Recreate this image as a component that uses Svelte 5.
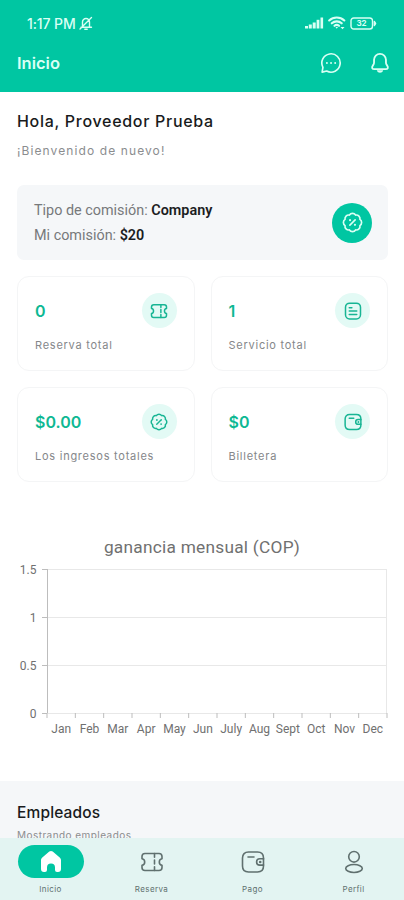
<script>
  let active = $state('home');

  const stats = [
    { value: '0',     label: 'Reserva total',        icon: 'ticket' },
    { value: '1',     label: 'Servicio total',       icon: 'doc'    },
    { value: '$0.00', label: 'Los ingresos totales', icon: 'seal'   },
    { value: '$0',    label: 'Billetera',            icon: 'wallet' },
  ];

  const tabs = [
    { id: 'home',    label: 'Inicio',  icon: 'home'   },
    { id: 'booking', label: 'Reserva', icon: 'ticket' },
    { id: 'payment', label: 'Pago',    icon: 'wallet' },
    { id: 'profile', label: 'Perfil',  icon: 'user'   },
  ];

  const months = ['Jan', 'Feb', 'Mar', 'Apr', 'May', 'Jun', 'July', 'Aug', 'Sept', 'Oct', 'Nov', 'Dec'];
  const levels = ['1.5', '1', '0.5', '0'];

  // plot area of the chart, in svg units
  const plot = { x: 47, y: 10, w: 340, h: 144 };
  const step = plot.w / months.length;

  // scalloped outline of the discount badge
  function scallop(bumps, r) {
    let d = '';
    for (let i = 0; i <= bumps; i++) {
      const a = (i / bumps) * Math.PI * 2 - Math.PI / 2 + Math.PI / bumps;
      const x = (12 + r * Math.cos(a)).toFixed(2);
      const y = (12 + r * Math.sin(a)).toFixed(2);
      d += i === 0 ? `M${x} ${y}` : `A4.2 4.2 0 0 1 ${x} ${y}`;
    }
    return d + 'Z';
  }
  const seal = scallop(8, 9.2);
</script>

{#snippet icon(name, size, width = 1.6)}
  <svg class="icon" width={size} height={size} viewBox="0 0 24 24" stroke-width={width}>
    {#if name === 'ticket'}
      <path d="M5 3.500h14a3 3 0 0 1 3 3v2.200c-1.700.2-2.700 1.600-2.700 3.300s1 3.100 2.700 3.300v2.200a3 3 0 0 1-3 3H5a3 3 0 0 1-3-3v-2.200c1.700-.2 2.700-1.600 2.700-3.300S3.700 8.900 2 8.700V6.500a3 3 0 0 1 3-3z" />
      <path d="M14.5 3.500v3.800M14.500 10v4M14.500 16.700v3.800" />
    {:else if name === 'doc'}
      <rect x="2" y="1.500" width="20" height="21" rx="5.500" />
      <path d="M7 7.500h3.500M7 12h10M7 16.500h10" />
    {:else if name === 'seal'}
      <path d={seal} />
      <path d="M9 15l6-6" />
      <circle class="dot" cx="9.200" cy="9.300" r="1.200" />
      <circle class="dot" cx="14.800" cy="14.700" r="1.200" />
    {:else if name === 'wallet'}
      <path d="M22.500 9V8c0-3.800-2.200-6-6-6h-9c-3.800 0-6 2.200-6 6v8c0 3.800 2.200 6 6 6h9c3.800 0 6-2.200 6-6v-1" />
      <path d="M22.500 8.700h-3.700a3.200 3.200 0 0 0 0 6.400h3.700zM7 7h6" />
      <circle class="dot" cx="19.200" cy="12" r="1.300" />
    {:else if name === 'user'}
      <circle cx="12" cy="6.800" r="5.300" />
      <ellipse cx="12" cy="18.500" rx="8.300" ry="4" />
    {:else if name === 'home'}
      <path class="solid" d="M10.300 1.600a2.800 2.800 0 0 1 3.400 0l7 5.800A3.400 3.400 0 0 1 22 10.100V19a3 3 0 0 1-3 3h-1a2 2 0 0 1-2-2v-2.500a4 4 0 0 0-8 0V20a2 2 0 0 1-2 2H5a3 3 0 0 1-3-3v-8.900a3.400 3.400 0 0 1 1.300-2.700z" />
    {:else if name === 'chat'}
      <path d="M2.300 22l.9-5.300a10 10 0 1 1 4.100 4.100z" />
      <path class="dots" d="M7.500 12h.1M12 12h.1M16.500 12h.1" />
    {:else if name === 'bell'}
      <path d="M12 2a6.500 6.500 0 0 0-6.500 6.500v3.200c0 1-.4 1.800-1.200 2.900-1.700 2.300-1 4.100 1.700 4.100h12c2.700 0 3.400-1.800 1.700-4.100-.8-1.100-1.200-1.900-1.200-2.900V8.500A6.500 6.500 0 0 0 12 2z" />
      <path class="solid" d="M8.500 20h7c-.7 2-2 2.600-3.500 2.600S9.200 22 8.500 20z" />
    {/if}
  </svg>
{/snippet}

<div class="screen">
  <header>
    <div class="status">
      <span class="time">1:17 PM</span>
      <svg class="icon" width="14" height="15" viewBox="0 0 14 15" stroke-width="1.4">
        <path d="M3.500 10.500V6A3.500 3.500 0 0 1 10.500 6v4.500M2 11.300h10.500M5.800 13.300h2.400M1 13L12.500 1.500" />
      </svg>
      <div class="signals">
        <svg width="19" height="12" viewBox="0 0 19 12" fill="currentColor">
          <rect x="0" y="9" width="3" height="2.500" />
          <rect x="3.800" y="7.500" width="3" height="4" />
          <rect x="7.700" y="5.500" width="3" height="6" />
          <rect x="11.600" y="2.800" width="2.800" height="8.700" />
          <rect x="15.500" y="0.500" width="2.600" height="11" />
        </svg>
        <svg class="icon" width="18" height="14" viewBox="0 0 18 14" stroke-width="2.1">
          <path d="M1.200 4.500a11 11 0 0 1 15.100 0M3.800 7.300a7.200 7.200 0 0 1 9.900 0M6.500 9.800a3.500 3.500 0 0 1 4.500 0" />
          <path class="solid" d="M7.500 11h2.500l-1.250 1.700zM12.500 11h4l-2 2.300z" />
        </svg>
        <span class="battery">
          <svg class="icon" width="27" height="13" viewBox="0 0 27 13" stroke-width="1.4">
            <rect x="1" y="1" width="21.500" height="11" rx="2.800" />
            <path d="M24.300 4.500l1.300 2-1.300 2z" />
          </svg>
          <b>32</b>
        </span>
      </div>
    </div>
    <div class="appbar">
      <h1>Inicio</h1>
      <button aria-label="Mensajes">{@render icon('chat', 22, 1.8)}</button>
      <button aria-label="Notificaciones">{@render icon('bell', 22, 2)}</button>
    </div>
  </header>

  <main>
    <h2 class="hello">Hola, Proveedor Prueba</h2>
    <p class="welcome">¡Bienvenido de nuevo!</p>

    <section class="commission">
      <div>
        <p>Tipo de comisión: <b>Company</b></p>
        <p>Mi comisión: <b>$20</b></p>
      </div>
      <span class="badge">{@render icon('seal', 21, 1.9)}</span>
    </section>

    <section class="stats">
      {#each stats as { value, label, icon: name }}
        <article>
          <div class="row">
            <strong>{value}</strong>
            <span class="bubble">{@render icon(name, 18, 2)}</span>
          </div>
          <p>{label}</p>
        </article>
      {/each}
    </section>
  </main>

  <section class="chart">
    <h3>ganancia mensual (COP)</h3>
    <svg width="404" height="190" viewBox="0 0 404 190">
      {#each levels as level, i}
        {@const y = plot.y + (i * plot.h) / 3 + 0.5}
        <line class="grid" x1={plot.x} x2={plot.x + plot.w} y1={y} y2={y} />
        <line class="axis" x1={plot.x - 5} x2={plot.x} y1={y} y2={y} />
        <text x="36.5" y={y + 4} text-anchor="end">{level}</text>
      {/each}
      <line class="grid" x1={plot.x + plot.w - 0.5} x2={plot.x + plot.w - 0.5} y1={plot.y} y2={plot.y + plot.h} />
      <line class="axis" x1={plot.x + 0.5} x2={plot.x + 0.5} y1={plot.y} y2={plot.y + plot.h} />
      {#each months as month, i}
        <text x={plot.x + step * (i + 0.5)} y="174" text-anchor="middle">{month}</text>
      {/each}
      {#each { length: 13 } as _, i}
        <line class="axis" x1={plot.x + step * i} x2={plot.x + step * i} y1={plot.y + plot.h} y2={plot.y + plot.h + 5} />
      {/each}
    </svg>
  </section>

  <section class="staff">
    <h2>Empleados</h2>
    <p>Mostrando empleados</p>
  </section>

  <nav>
    {#each tabs as { id, label, icon: name }}
      <button class:active={active === id} onclick={() => active = id}>
        <span class="pill">{@render icon(name, 24, 1.6)}</span>
        <span class="label">{label}</span>
      </button>
    {/each}
  </nav>
</div>

<style>
  :global(body) { background: #fff; }
  .screen {
    --green: #00c6a2;
    --sans: Inter, "Open Sans", sans-serif;
    width: 404px; height: 900px; overflow: hidden;
    display: flex; flex-direction: column;
    font-family: var(--sans); color: #191b1c; background: #fff;
  }
  h1, h2, h3, p { margin: 0; }
  button {
    padding: 0; border: none; background: none;
    color: inherit; font: inherit; cursor: pointer;
  }
  svg { display: block; flex-shrink: 0; }
  .icon { fill: none; stroke: currentColor; stroke-linecap: round; stroke-linejoin: round; }
  .icon .solid, .icon .dot { fill: currentColor; stroke: none; }
  .icon .dots { stroke-width: 2; }

  header {
    height: 92px; flex-shrink: 0; box-sizing: border-box;
    background: var(--green); color: #d9fff4;
  }
  .status {
    display: flex; align-items: center; height: 46px;
    padding: 0 27px;
  }
  .time { font-size: 14px; font-weight: 500; letter-spacing: -0.1px; margin-right: 3px; }
  .signals { display: flex; align-items: center; gap: 4px; margin-left: auto; }
  .battery { position: relative; }
  .battery b {
    position: absolute; left: 0; top: 0; width: 23px;
    font-size: 8px; line-height: 13px; text-align: center;
  }
  .appbar {
    display: flex; align-items: center; height: 34px;
    padding: 0 13px 0 17px; gap: 27px;
  }
  h1 { margin-right: auto; font-size: 16.5px; font-weight: 600; letter-spacing: 0; }

  main { padding: 18px 16px 0 17px; }
  .hello { font-size: 16px; line-height: 22px; font-weight: 500; letter-spacing: 0.7px; white-space: nowrap; }
  .welcome { margin-top: 8px; font-size: 12px; line-height: 22px; letter-spacing: 1.1px; color: #8b8d8f; }

  .commission {
    display: flex; align-items: center; justify-content: space-between;
    height: 75px; margin-top: 23px; padding: 0 16px 0 17px; box-sizing: border-box;
    border-radius: 7px; background: #f5f7f9;
    font-family: Roboto, sans-serif; font-size: 14.4px; line-height: 25px; color: #77797b;
  }
  .commission b { font-weight: 600; color: #1b1d1f; }
  .badge, .bubble { display: grid; place-items: center; border-radius: 50%; }
  .badge { width: 40px; height: 40px; background: var(--green); color: #d9fff4; }

  .stats { display: grid; grid-template-columns: 1fr 1fr; gap: 16px; margin-top: 16px; }
  article {
    height: 95px; padding: 16px 17px 0 17px; box-sizing: border-box;
    border: 1.5px solid #f4f5f6; border-radius: 12px;
  }
  .row { display: flex; align-items: center; justify-content: space-between; }
  .row strong { font-size: 16px; font-weight: 600; color: #0eb893; }
  .bubble { width: 35px; height: 35px; background: #e3faf5; color: #18b594; }
  article p { margin-top: 7px; font-size: 11px; line-height: 20px; letter-spacing: 0.75px; color: #85878a; }

  .chart { margin-top: 53px; font-family: Roboto, sans-serif; }
  .chart h3 { font-size: 17.3px; line-height: 24px; font-weight: 400; text-align: center; letter-spacing: 0.25px; color: #707070; }
  .chart text { font-size: 12px; fill: #707070; }
  .grid { stroke: #e8e8e8; }
  .axis { stroke: #bdbdbd; }

  .staff { flex: 1; margin-top: 32px; padding: 21px 17px 0; background: #f5f7f9; overflow: hidden; }
  .staff h2 { font-size: 15.5px; line-height: 22px; font-weight: 500; letter-spacing: 0.15px; }
  .staff p { margin-top: 1px; font-size: 10px; line-height: 20px; letter-spacing: 0.45px; color: #8b8d8f; }

  nav {
    display: flex; height: 62px; flex-shrink: 0; box-sizing: border-box;
    background: #e3f4f2;
  }
  nav button {
    flex: 1; display: flex; flex-direction: column; align-items: center;
    padding-top: 7px; color: #60706f;
  }
  .pill { display: grid; place-items: center; width: 66px; height: 33px; border-radius: 17px; }
  .active .pill { background: var(--green); color: #fff; }
  .label { margin-top: 5px; font-size: 8px; line-height: 12px; letter-spacing: 0.4px; }
</style>
